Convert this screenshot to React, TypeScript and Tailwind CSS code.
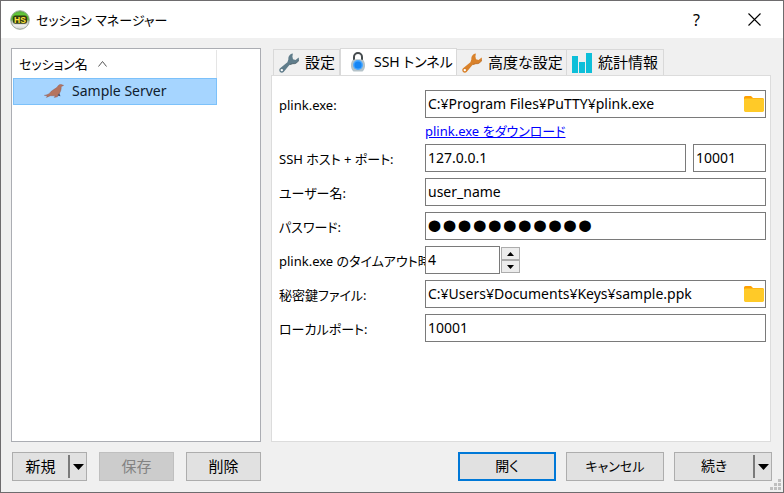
import React, { useState } from "react";
import type { ReactNode } from "react";

const field =
  "h-7 w-full min-w-0 border border-[#7a7a7a] bg-white px-0.5 pb-0.5 text-black outline-none";
const pushButton =
  "h-[29px] border border-[#adadad] bg-[#e1e1e1] pb-0.5 text-center text-black";

function AppLogo() {
  return (
    <svg width="20" height="20" viewBox="0 0 20 20" aria-hidden="true">
      <defs>
        <linearGradient id="logo" x1="0" y1="0" x2="0" y2="1">
          <stop offset="0" stopColor="#5aa743" />
          <stop offset="0.2" stopColor="#62c838" />
          <stop offset="0.45" stopColor="#46a722" />
          <stop offset="0.6" stopColor="#b9bfb5" />
          <stop offset="0.8" stopColor="#eeeeee" />
          <stop offset="1" stopColor="#cfd2cd" />
        </linearGradient>
      </defs>
      <circle cx="10" cy="10" r="9.3" fill="url(#logo)" stroke="#9aa596" />
      <rect x="3" y="5.6" width="14" height="8.2" rx="2.5" fill="#2f3a10" />
      <text x="10" y="12.6" textAnchor="middle" fontSize="8.5" fontWeight="bold" fill="#ffe23a" fontFamily="Liberation Sans, sans-serif">
        HS
      </text>
    </svg>
  );
}

function Wrench({ color, shade }: { color: string; shade: string }) {
  return (
    <svg width="20" height="20" viewBox="0 0 20 20" aria-hidden="true">
      <path
        d="M13.9.5C11 .8 9 3.4 9.4 6.2L8.4 9.3 1.1 15.3C0 16.2 0 17.9 1 18.9s2.7 1 3.6 0l6-7.2 3.2-1c2.8.4 5.5-1.4 6-4.2.2-.7.1-1.4-.1-2l-3.2 2.4-2.5-.7-.6-2.6Z"
        fill={color}
      />
      <path d="M10.6 11.6l3.2-.9c2.8.4 5.5-1.4 6-4.2" fill="none" stroke={shade} strokeWidth=".8" />
      <circle cx="2.8" cy="17.1" r="1.2" fill="#fff" />
    </svg>
  );
}

function Padlock() {
  return (
    <svg width="20" height="20" viewBox="0 0 20 20" aria-hidden="true">
      <path d="M6 9V5a4 4 0 0 1 8 0V9" fill="none" stroke="#454a4d" strokeWidth="2" />
      <path d="M4.5 8.2C7 7 13 7 15.5 8.2 18 12 17.3 17 14.5 19.5h-9C2.7 17 2 12 4.5 8.2Z" fill="#b4c2c8" />
      <circle cx="10" cy="13" r="5" fill="#4aa8ff" />
      <circle cx="10" cy="13" r="3.6" fill="#1586f5" />
    </svg>
  );
}

function Bars() {
  return (
    <svg width="20" height="20" viewBox="0 0 20 20" aria-hidden="true" fill="#0dbfd9">
      <path d="M0 3h6v17H0zM7 9h6v11H7zM14 0h6v20h-6z" />
    </svg>
  );
}

function Folder() {
  return (
    <svg width="20" height="16" viewBox="0 0 20 16" aria-hidden="true">
      <path d="M0 4V1.6Q0 0 1.6 0H7l2 2h9.4Q20 2 20 3.6V8H0Z" fill="#ffa000" />
      <rect y="2.6" width="20" height="13.4" rx="1.4" fill="#ffca28" />
    </svg>
  );
}

function SeaLion() {
  return (
    <svg width="20" height="14" viewBox="0 0 20 14" aria-hidden="true">
      <path d="M14.5 7l2 5.2-3.5-.6Z" fill="#3e5070" />
      <path
        d="M19.6 1.4 17 .4C15.2.2 14.2 1.4 13.4 3 11.4 5 7.6 6 5.4 9.4 4 10.6 2 11 .4 11.4l3.2.4-1.2 1.6 4-1.7 5 .1-1.2 1.6 3.2-.6.8-2.2c2.2-1.8 3.2-5.2 3-8Z"
        fill="#b5745f"
        stroke="#8d5146"
        strokeWidth=".4"
      />
    </svg>
  );
}

function Triangle({ up = false, size = 11 }: { up?: boolean; size?: number }) {
  return (
    <svg width={size} height={(size + 1) / 2} viewBox="0 0 10 5" preserveAspectRatio="none" aria-hidden="true">
      <path d={up ? "M0 5 5 0l5 5Z" : "M0 0h10L5 5Z"} fill="#000" />
    </svg>
  );
}

function Row({ id, label, children }: { id: string; label: string; children: ReactNode }) {
  return (
    <>
      <label htmlFor={id} className="overflow-hidden pt-px text-[13px]/5 whitespace-nowrap">
        {label}
      </label>
      <div className="flex items-center">{children}</div>
    </>
  );
}

function PathField({ id, value }: { id: string; value: string }) {
  return (
    <div className="flex h-7 w-full items-center border border-[#7a7a7a] bg-white pr-px">
      <input id={id} defaultValue={value} className="h-full min-w-0 flex-1 px-0.5 pb-0.5 outline-none" />
      <button type="button" aria-label="参照">
        <Folder />
      </button>
    </div>
  );
}

function SplitButton({ label, width }: { label: string; width: string }) {
  return (
    <div className={`flex h-[29px] items-center border border-[#adadad] bg-[#e1e1e1] ${width}`}>
      <button type="button" className="h-full flex-1 pb-0.5">
        {label}
      </button>
      <button type="button" aria-label={`${label} メニュー`} className="flex h-[23px] w-[18px] items-center justify-center border-l-2 border-[#7a7a7a]">
        <Triangle />
      </button>
    </div>
  );
}

const tabs = [
  { label: "設定", icon: <Wrench color="#607d8b" shade="#455a64" />, width: "w-[67px] text-[15px]" },
  { label: "SSH トンネル", icon: <Padlock />, width: "w-[117px]" },
  { label: "高度な設定", icon: <Wrench color="#d9822b" shade="#b8651b" />, width: "w-[110px] text-[15px]" },
  { label: "統計情報", icon: <Bars />, width: "w-[97px] text-[15px]" },
];

export default function App() {
  const [timeout, setTimeoutValue] = useState(4);
  return (
    <div className="flex min-h-screen flex-col border border-[#6e6c6e] bg-[#f0f0f0] font-['Noto_Sans','Noto_Sans_CJK_JP',sans-serif] text-sm text-black [font-feature-settings:'palt']">
      <header className="flex h-[37px] items-center bg-white pl-[9px]">
        <AppLogo />
        <h1 className="ml-1.5 flex-1 text-[13px]/5">セッション マネージャー</h1>
        <button type="button" aria-label="ヘルプ" className="w-[57px] text-base">
          ?
        </button>
        <button type="button" aria-label="閉じる" className="flex w-[58px] justify-center">
          <svg width="13" height="13" viewBox="0 0 13 13" aria-hidden="true">
            <path d="M.5.5l12 12M12.5.5l-12 12" stroke="#000" strokeWidth="1.1" />
          </svg>
        </button>
      </header>

      <main className="flex flex-1 gap-2.5 pt-2.5 pr-3 pb-2.5 pl-2.5">
        <section className="w-[250px] shrink-0 border border-[#abadb3] bg-white p-px">
          <button type="button" className="flex h-7 w-[204px] items-center gap-2.5 border-r border-[#e5e5e5] pl-1.5 text-[13px]/5">
            セッション名
            <svg width="9" height="6" viewBox="0 0 9 6" aria-hidden="true">
              <path d="M.5 5.5l4-5 4 5" fill="none" stroke="#555" />
            </svg>
          </button>
          <ul>
            <li>
              <button type="button" className="flex h-[27px] w-[204px] items-center gap-2 border border-[#7cc1fa] bg-[#a6d5ff] pb-0.5 pl-[30px] text-[#10202e]">
                <SeaLion />
                Sample Server
              </button>
            </li>
          </ul>
        </section>

        <section className="flex min-w-0 flex-1 flex-col">
          <div role="tablist" className="flex items-end pl-0.5">
            {tabs.map((tab, i) => (
              <button
                key={tab.label}
                type="button"
                role="tab"
                aria-selected={i === 1}
                className={`flex shrink-0 items-center border-t border-[#d9d9d9] whitespace-nowrap ${tab.width} ${
                  i === 1 ? "-mb-px h-7 gap-1.5 border-r border-l bg-white pb-0.5 pl-[7px]" : "h-[26px] gap-1.5 border-r pl-[5px]"
                } ${i === 0 ? "border-l" : ""}`}
              >
                {tab.icon}
                {tab.label}
              </button>
            ))}
          </div>
          <form className="flex-1 border border-[#dcdcdc] bg-white pt-3.5 pr-1 pl-[7px]">
            <div className="grid grid-cols-[146px_1fr] items-center gap-y-1.5">
              <Row id="plink" label="plink.exe:">
                <PathField id="plink" value="C:¥Program Files¥PuTTY¥plink.exe" />
              </Row>
              <a href="#download" className="col-start-2 -my-[3px] justify-self-start text-[13px]/5 text-[#0000ff] underline">
                plink.exe をダウンロード
              </a>
              <Row id="host" label="SSH ホスト + ポート:">
                <input id="host" defaultValue="127.0.0.1" className={field} />
                <input aria-label="ポート" defaultValue="10001" className="ml-[7px] h-7 w-[73px] shrink-0 border border-[#7a7a7a] px-0.5 pb-0.5" />
              </Row>
              <Row id="user" label="ユーザー名:">
                <input id="user" defaultValue="user_name" className={field} />
              </Row>
              <Row id="password" label="パスワード:">
                <input
                  id="password"
                  type="password"
                  defaultValue="samplepass1"
                  className="h-7 w-full min-w-0 border border-[#7a7a7a] px-px font-['Liberation_Sans',sans-serif] text-[43px] outline-none"
                />
              </Row>
              <Row id="timeout" label="plink.exe のタイムアウト時間:">
                <input
                  id="timeout"
                  type="number"
                  value={timeout}
                  onChange={(e) => setTimeoutValue(Number(e.target.value))}
                  className="h-7 w-[75px] border border-[#7a7a7a] px-0.5 pb-0.5 [appearance:textfield]"
                />
                <div className="ml-px flex h-[26px] w-[19px] flex-col">
                  <button type="button" aria-label="増やす" onClick={() => setTimeoutValue(timeout + 1)} className="flex flex-1 items-center justify-center border border-[#acacac] bg-[#ececec]">
                    <Triangle up size={7} />
                  </button>
                  <button type="button" aria-label="減らす" onClick={() => setTimeoutValue(timeout - 1)} className="flex flex-1 items-center justify-center border border-[#acacac] bg-[#ececec]">
                    <Triangle size={7} />
                  </button>
                </div>
              </Row>
              <Row id="key" label="秘密鍵ファイル:">
                <PathField id="key" value="C:¥Users¥Documents¥Keys¥sample.ppk" />
              </Row>
              <Row id="local" label="ローカルポート:">
                <input id="local" defaultValue="10001" className={field} />
              </Row>
            </div>
          </form>
        </section>
      </main>

      <footer className="relative flex items-center px-[11px] pb-[11px] text-[15px]/5">
        <div className="flex gap-3">
          <SplitButton label="新規" width="w-[75px]" />
          <button type="button" disabled className="h-[29px] w-[75px] border border-[#bfbfbf] bg-[#cccccc] pb-0.5 text-[#838383]">
            保存
          </button>
          <button type="button" className={`${pushButton} w-[75px]`}>
            削除
          </button>
        </div>
        <div className="ml-auto flex gap-2.5">
          <button type="button" className="h-[29px] w-[98px] border-2 border-[#0078d7] bg-[#e1e1e1] pb-0.5 text-sm">
            開く
          </button>
          <button type="button" className={`${pushButton} w-[98px] text-[13px]/5`}>
            キャンセル
          </button>
          <SplitButton label="続き" width="w-[98px] text-sm" />
        </div>
        <svg className="absolute right-0.5 bottom-0.5" width="11" height="11" viewBox="0 0 11 11" aria-hidden="true">
          <path d="M8 0h3v3H8zM4 4h3v3H4zM8 4h3v3H8zM0 8h3v3H0zM4 8h3v3H4zM8 8h3v3H8z" fill="#bfbfbf" />
        </svg>
      </footer>
    </div>
  );
}
